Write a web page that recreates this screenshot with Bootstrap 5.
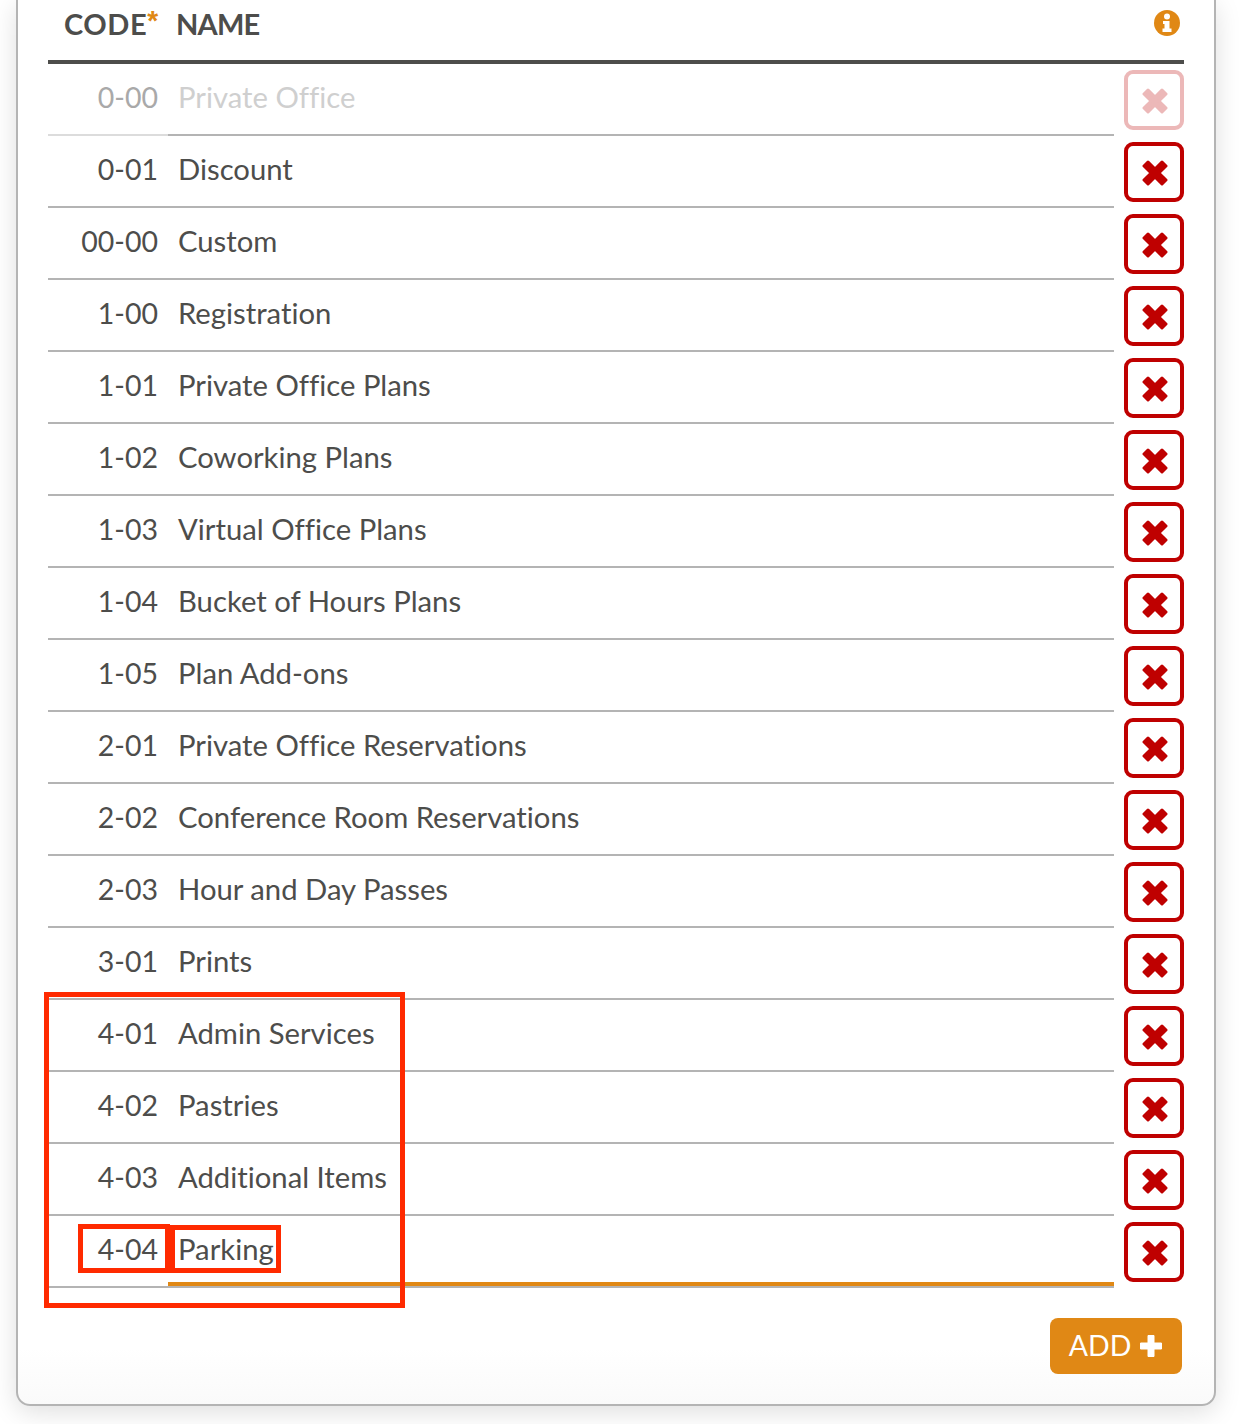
<!DOCTYPE html>
<html lang="en">
  <head>
    <meta charset="UTF-8" />
    <title>Account Codes</title>
    <link rel="stylesheet" href="https://cdn.jsdelivr.net/npm/bootstrap@5.3.3/dist/css/bootstrap.min.css" />
    <script src="https://cdn.jsdelivr.net/npm/bootstrap@5.3.3/dist/js/bootstrap.bundle.min.js"></script>
    <style>
      body {
        background: #fff;
        color: #4d4d4b;
        font-family: Lato, "Open Sans", sans-serif;
        font-variant-ligatures: none;
      }
      .page-wrap {
        width: 1256px;
        height: 1424px;
        padding: 0 40px 18px 16px;
        overflow: hidden;
      }
      .code-panel {
        height: 1406px;
        padding: 0 30px;
        border: 2px solid #b4b4b4;
        border-top: 0;
        border-radius: 0 0 14px 14px;
        background: linear-gradient(to bottom, #fff 96%, #fafafa 100%);
        box-shadow: 0 6px 26px rgba(0, 0, 0, 0.13);
      }
      .head-row {
        height: 64px;
        padding-bottom: 12px;
        border-bottom: 4px solid #4d4d4b;
        font-size: 29px;
        font-weight: 700;
      }
      .head-code {
        width: 128px;
        padding-left: 16px;
        letter-spacing: 0.6px;
      }
      .head-name {
        letter-spacing: -0.8px;
      }
      .req-star {
        color: #e08815;
        font-family: "Liberation Sans", sans-serif;
        font-size: 28px;
        font-weight: 700;
        line-height: 1;
        vertical-align: 5px;
      }
      .info-icon {
        width: 28px;
        height: 28px;
        margin: 9px 3px 0 auto;
      }
      .code-row {
        height: 72px;
      }
      .cell-code,
      .cell-name {
        height: 72px;
        border-bottom: 2px solid #b4b4b4;
        font-size: 29.25px;
        line-height: 66px;
      }
      .cell-code {
        width: 120px;
        padding-right: 10px;
        font-size: 28.5px;
        text-align: right;
      }
      .cell-name {
        width: 946px;
        padding-left: 10px;
      }
      .cell-focus {
        box-shadow: inset 0 -4px 0 #e08815;
      }
      .row-off .cell-code {
        color: #a9a9a9;
        border-bottom-color: #dcdcdc;
      }
      .row-off .cell-name {
        color: #cfcfcf;
      }
      .del-btn {
        width: 60px;
        height: 60px;
        margin: 6px 0 0 10px;
        padding: 2px 0 0 2px;
        background: #fff;
        border: 4px solid #bf0000;
        border-radius: 9px;
        color: #bf0000;
      }
      .del-btn:disabled {
        border-color: #ecb8b8;
        color: #ecb8b8;
        opacity: 1;
      }
      .del-btn svg {
        width: 26px;
        height: 26px;
      }
      .add-btn {
        width: 132px;
        height: 56px;
        margin: 30px 2px 0 auto;
        padding-bottom: 2px;
        background: #e08815;
        border: 0;
        border-radius: 8px;
        color: #fff;
        font-size: 28.5px;
      }
      .add-btn svg {
        width: 24px;
        height: 24px;
      }
      .mark-box {
        position: absolute;
        border: 5px solid #ff2a00;
      }
      .mark-group {
        left: 44px;
        top: 992px;
        width: 361px;
        height: 316px;
      }
      .mark-code {
        left: 78px;
        top: 1224px;
        width: 92px;
        height: 49px;
      }
      .mark-name {
        left: 170px;
        top: 1225px;
        width: 111px;
        height: 48px;
      }
    </style>
  </head>
  <body>
    <svg class="d-none">
      <symbol id="ico-x" viewBox="0 0 26 26">
        <path d="M6 2 L13 9.1 L20 2 L24 6 L16.9 13 L24 20 L20 24 L13 16.9 L6 24 L2 20 L9.1 13 L2 6 Z" fill="currentColor" stroke="currentColor" stroke-width="3" stroke-linejoin="round" />
      </symbol>
      <symbol id="ico-plus" viewBox="0 0 24 24">
        <path d="M9 1.5 H15 V9 H22.5 V15 H15 V22.5 H9 V15 H1.5 V9 H9 Z" fill="currentColor" stroke="currentColor" stroke-width="1" stroke-linejoin="round" />
      </symbol>
    </svg>

    <div class="page-wrap position-relative">
      <div class="code-panel">
        <div class="head-row d-flex align-items-center">
          <div class="head-code text-nowrap">CODE<span class="req-star">*</span></div>
          <div class="head-name">NAME</div>
          <svg class="info-icon align-self-start" viewBox="0 0 28 28">
            <circle cx="14" cy="14" r="13" fill="#e08815" />
            <circle cx="14" cy="7.5" r="3" fill="#fff" />
            <path d="M10 12 H16.5 V19.5 H18.5 V23 H9.5 V19.5 H11.5 V15 H10 Z" fill="#fff" />
          </svg>
        </div>

        <div class="code-row row-off d-flex">
          <div class="cell-code">0-00</div>
          <div class="cell-name">Private Office</div>
          <button class="del-btn" type="button" disabled><svg><use href="#ico-x" /></svg></button>
        </div>
        <div class="code-row d-flex"><div class="cell-code">0-01</div><div class="cell-name">Discount</div><button class="del-btn" type="button"><svg><use href="#ico-x" /></svg></button></div>
        <div class="code-row d-flex"><div class="cell-code">00-00</div><div class="cell-name">Custom</div><button class="del-btn" type="button"><svg><use href="#ico-x" /></svg></button></div>
        <div class="code-row d-flex"><div class="cell-code">1-00</div><div class="cell-name">Registration</div><button class="del-btn" type="button"><svg><use href="#ico-x" /></svg></button></div>
        <div class="code-row d-flex"><div class="cell-code">1-01</div><div class="cell-name">Private Office Plans</div><button class="del-btn" type="button"><svg><use href="#ico-x" /></svg></button></div>
        <div class="code-row d-flex"><div class="cell-code">1-02</div><div class="cell-name">Coworking Plans</div><button class="del-btn" type="button"><svg><use href="#ico-x" /></svg></button></div>
        <div class="code-row d-flex"><div class="cell-code">1-03</div><div class="cell-name">Virtual Office Plans</div><button class="del-btn" type="button"><svg><use href="#ico-x" /></svg></button></div>
        <div class="code-row d-flex"><div class="cell-code">1-04</div><div class="cell-name">Bucket of Hours Plans</div><button class="del-btn" type="button"><svg><use href="#ico-x" /></svg></button></div>
        <div class="code-row d-flex"><div class="cell-code">1-05</div><div class="cell-name">Plan Add-ons</div><button class="del-btn" type="button"><svg><use href="#ico-x" /></svg></button></div>
        <div class="code-row d-flex"><div class="cell-code">2-01</div><div class="cell-name">Private Office Reservations</div><button class="del-btn" type="button"><svg><use href="#ico-x" /></svg></button></div>
        <div class="code-row d-flex"><div class="cell-code">2-02</div><div class="cell-name">Conference Room Reservations</div><button class="del-btn" type="button"><svg><use href="#ico-x" /></svg></button></div>
        <div class="code-row d-flex"><div class="cell-code">2-03</div><div class="cell-name">Hour and Day Passes</div><button class="del-btn" type="button"><svg><use href="#ico-x" /></svg></button></div>
        <div class="code-row d-flex"><div class="cell-code">3-01</div><div class="cell-name">Prints</div><button class="del-btn" type="button"><svg><use href="#ico-x" /></svg></button></div>
        <div class="code-row d-flex"><div class="cell-code">4-01</div><div class="cell-name">Admin Services</div><button class="del-btn" type="button"><svg><use href="#ico-x" /></svg></button></div>
        <div class="code-row d-flex"><div class="cell-code">4-02</div><div class="cell-name">Pastries</div><button class="del-btn" type="button"><svg><use href="#ico-x" /></svg></button></div>
        <div class="code-row d-flex"><div class="cell-code">4-03</div><div class="cell-name">Additional Items</div><button class="del-btn" type="button"><svg><use href="#ico-x" /></svg></button></div>
        <div class="code-row d-flex"><div class="cell-code">4-04</div><div class="cell-name cell-focus">Parking</div><button class="del-btn" type="button"><svg><use href="#ico-x" /></svg></button></div>

        <div class="d-flex">
          <button class="add-btn d-flex align-items-center justify-content-center gap-2" type="button">ADD <svg><use href="#ico-plus" /></svg></button>
        </div>
      </div>

      <div class="mark-box mark-group"></div>
      <div class="mark-box mark-code"></div>
      <div class="mark-box mark-name"></div>
    </div>
  </body>
</html>
